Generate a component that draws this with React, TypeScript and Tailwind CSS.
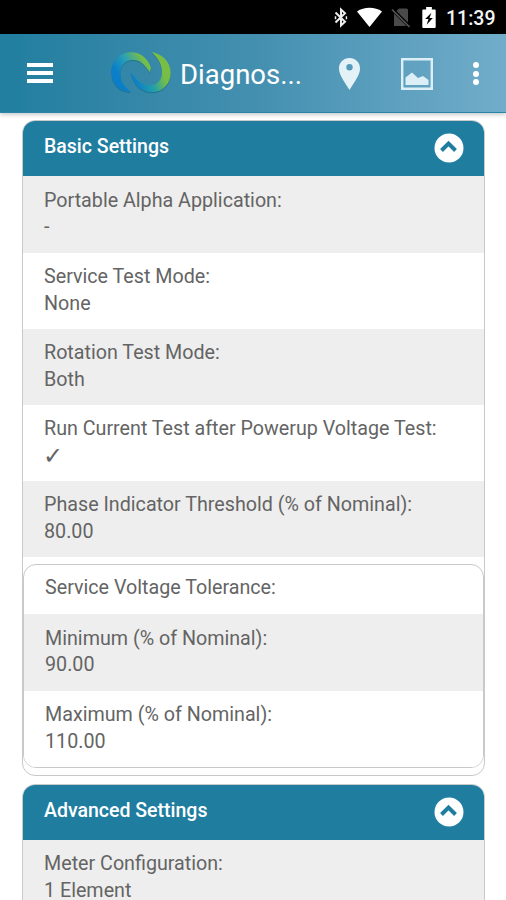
import React from "react";

type Item = { label: string; value?: string };

const basic: Item[] = [
  { label: "Portable Alpha Application:", value: "-" },
  { label: "Service Test Mode:", value: "None" },
  { label: "Rotation Test Mode:", value: "Both" },
  { label: "Run Current Test after Powerup Voltage Test:", value: "✓" },
  { label: "Phase Indicator Threshold (% of Nominal):", value: "80.00" },
];

const tolerance: Item[] = [
  { label: "Minimum (% of Nominal):", value: "90.00" },
  { label: "Maximum (% of Nominal):", value: "110.00" },
];

function StatusBar() {
  return (
    <div className="flex h-[34px] items-center bg-black text-white">
      <svg className="ml-[334px] h-[21px] w-[14px]" viewBox="0 0 14 21" fill="none" stroke="#eee" strokeWidth="2">
        <path d="M1.5 5.500 11 14.800 7 18.500V2.500L11 6.200 1.500 15.500" />
        <path d="M12.400 9.200v3M1.500 9.200v3" strokeWidth="1.500" />
      </svg>
      <svg className="ml-[9px] h-[20px] w-[25px]" viewBox="0 0 25 20" fill="#fff">
        <path d="M0 4.5C7-.5 18-.5 25 4.5L12.5 20Z" />
      </svg>
      <svg className="ml-[9px] h-[21px] w-[20px]" viewBox="0 0 20 21">
        <path d="M8 1.5h7.5a1.5 1.5 0 0 1 1.5 1.5v16H3V6.5Z" fill="#4a4a4a" />
        <path d="M0 1 19 20" stroke="#000" strokeWidth="3.4" />
        <path d="M1 2.5 18.5 20" stroke="#555" strokeWidth="1.7" />
      </svg>
      <svg className="ml-[11px] h-[21px] w-[14px]" viewBox="0 0 14 22">
        <path d="M4 0h6v2.5h3a1 1 0 0 1 1 1V21a1 1 0 0 1-1 1H1a1 1 0 0 1-1-1V3.500a1 1 0 0 1 1-1h3Z" fill="#fff" />
        <path d="M9.500 6 3 12.500h3.500L4.500 18.500 11 11.500H7.500Z" fill="#000" />
      </svg>
      <span className="ml-[10px] mt-[3px] text-[19.5px] leading-none font-medium text-[#f4f4f4]">11:39</span>
    </div>
  );
}

function Logo() {
  return (
    <svg className="ml-[58px] h-[42px] w-[61px] shrink-0" viewBox="0 0 183 126">
      <defs>
        <linearGradient id="left" x1="0.1" y1="0.8" x2="0.95" y2="0.2">
          <stop offset="0.2" stopColor="#0a7fc8" />
          <stop offset="0.55" stopColor="#2a9fb5" />
          <stop offset="0.9" stopColor="#76bd4a" />
        </linearGradient>
        <linearGradient id="right" x1="0" y1="0.7" x2="1" y2="0.3">
          <stop offset="0.1" stopColor="#0a82c8" />
          <stop offset="0.45" stopColor="#25a2a4" />
          <stop offset="0.75" stopColor="#78bd45" />
        </linearGradient>
      </defs>
      <g fill="#155b77" opacity=".5" transform="translate(0 3)">
        <path d="M60 120C27 121 1 98 1 61C1 27 27 1 61 1C91 1 113 24 120 48L116 61C100 37 87 24 67 24C42 24 28 42 28 66C28 88 40 104 60 120Z" />
        <path d="M121 0C154 5 179 31 179 62C179 96 154 121 121 121C91 121 67 98 59 61C76 84 94 100 115 100C139 100 153 85 153 60C153 37 140 17 121 0Z" />
      </g>
      <path fill="url(#left)" d="M60 120C27 121 1 98 1 61C1 27 27 1 61 1C91 1 113 24 120 48L116 61C100 37 87 24 67 24C42 24 28 42 28 66C28 88 40 104 60 120Z" />
      <path fill="url(#right)" d="M121 0C154 5 179 31 179 62C179 96 154 121 121 121C91 121 67 98 59 61C76 84 94 100 115 100C139 100 153 85 153 60C153 37 140 17 121 0Z" />
    </svg>
  );
}

function AppBar() {
  return (
    <header className="flex h-[79px] items-center border-b border-[#2786a7] bg-linear-to-r from-[#207e9f] via-[#438fb0] to-[#71adca] shadow-[0_2px_4px_rgba(0,0,0,0.2)]">
      <div className="ml-[27px] flex w-[26px] shrink-0 flex-col gap-1">
        <i className="h-1 bg-white" />
        <i className="h-1 bg-white" />
        <i className="h-1 bg-white" />
      </div>
      <Logo />
      <h1 className="ml-[8px] mt-[3px] w-[124px] shrink-0 text-[27.5px] leading-8 whitespace-nowrap text-white">Diagnos...</h1>
      <svg className="ml-[35px] mt-px h-[32px] w-[21px] shrink-0" viewBox="0 0 21 32" fill="#e4f2f8">
        <path fillRule="evenodd" d="M10.500 0C4.600 0 0 4.600 0 10.500C0 17 5 23 10.500 32C16 23 21 17 21 10.500C21 4.600 16.400 0 10.500 0Zm0 6a3.200 3.200 0 1 1 0 6.400a3.200 3.200 0 0 1 0-6.400Z" />
      </svg>
      <svg className="ml-[41px] mt-px h-[32px] w-[32px] shrink-0" viewBox="0 0 32 32">
        <path d="M1.200 1.200h29.600v29.600H1.200Z" fill="none" stroke="#dceff7" strokeWidth="2.400" />
        <path d="M4.500 27V19.500L11 14.500l6 5.500 5-2 5.500 4v5Z" fill="#dceff7" />
      </svg>
      <div className="ml-[40px] mt-px flex flex-col gap-[2.5px]">
        <i className="size-[6px] rounded-full bg-white" />
        <i className="size-[6px] rounded-full bg-white" />
        <i className="size-[6px] rounded-full bg-white" />
      </div>
    </header>
  );
}

function Row({ item, shaded }: { item: Item; shaded: boolean }) {
  return (
    <div className={`h-[76.1px] pt-[11.4px] pl-[21px] ${shaded ? "bg-[#eeeeee]" : "bg-white"}`}>
      <div>{item.label}</div>
      <div className={item.value === "✓" ? "-ml-px text-[24px]" : ""}>{item.value}</div>
    </div>
  );
}

function CardHeader({ title }: { title: string }) {
  return (
    <div className="flex h-[54.6px] items-center justify-between rounded-t-[12px] bg-[#1f7da0] pr-[20px] pl-[21px] text-white">
      <span className="mb-[2px] text-[19.5px] font-medium">{title}</span>
      <svg className="size-[30px]" viewBox="0 0 30 30">
        <circle cx="15" cy="15" r="14.500" fill="#fff" />
        <path d="m7.500 17.500 7-7 7 7" fill="none" stroke="#1f7da0" strokeWidth="4" />
      </svg>
    </div>
  );
}

export default function App() {
  return (
    <div className="h-[900px] w-[506px] overflow-hidden bg-white font-[Roboto,sans-serif] text-[19.7px] leading-[26.6px] text-[#646464]">
      <StatusBar />
      <AppBar />
      <main className="flex flex-col gap-2 pr-[21px] pl-[22px] pt-[7px]">
        <section className="h-[656px] shrink-0 rounded-[13px] border border-[#c9c9c9]">
          <CardHeader title="Basic Settings" />
          <div className="pt-[0.9px]">
            {basic.map((item, i) => (
              <Row key={item.label} item={item} shaded={i % 2 === 0} />
            ))}
          </div>
          <div className="mt-[7px] h-[204px] overflow-hidden rounded-[13px] border border-[#c9c9c9]">
            <div className="h-[49.5px] pt-[10.5px] pl-[21px]">Service Voltage Tolerance:</div>
            {tolerance.map((item, i) => (
              <Row key={item.label} item={item} shaded={i % 2 === 0} />
            ))}
          </div>
        </section>
        <section className="h-[200px] shrink-0 rounded-[13px] border border-[#c9c9c9]">
          <CardHeader title="Advanced Settings" />
          <Row item={{ label: "Meter Configuration:", value: "1 Element" }} shaded />
        </section>
      </main>
    </div>
  );
}
